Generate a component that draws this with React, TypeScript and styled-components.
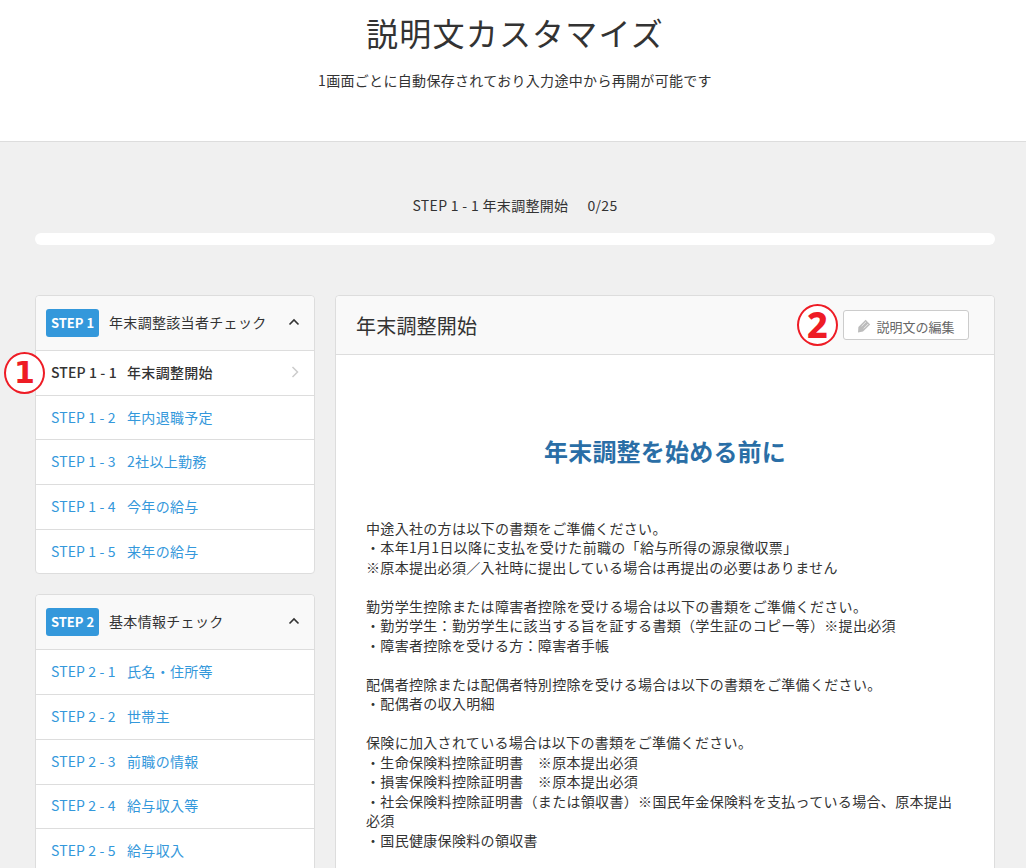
import React from "react";
import styled, { createGlobalStyle } from "styled-components";

const Global = createGlobalStyle`
  html, body { margin: 0; padding: 0; }
  body {
    background: #f0f0f0;
    color: #333;
    font-family: "Noto Sans CJK JP", "Noto Sans", sans-serif;
    font-size: 14px;
    letter-spacing: .32px;
    height: 868px;
    overflow: hidden;
  }
`;

const Header = styled.header`
  background: #fff;
  border-bottom: 1px solid #ddd;
  height: 141px;
  padding-left: 4px;
  text-align: center;
`;
const Title = styled.h1`
  margin: 0;
  padding-top: 9px;
  font-size: 32px;
  font-weight: 400;
  letter-spacing: 1.2px;
  line-height: 46px;
  color: #333;
`;
const Lead = styled.p`
  margin: 15px 0 0;
  font-size: 14px;
  line-height: 20px;
`;
const Progress = styled.section`
  padding: 53px 31px 0 35px;
`;
const ProgressLabel = styled.div`
  display: flex;
  justify-content: center;
  gap: 19px;
  font-size: 14px;
  line-height: 20px;
`;
const ProgressBar = styled.div`
  margin-top: 18px;
  height: 12px;
  border-radius: 6px;
  background: #fff;
`;
const Columns = styled.div`
  display: grid;
  grid-template-columns: 280px 660px;
  gap: 20px;
  padding: 50px 31px 0 35px;
  align-items: start;
`;
const Sidebar = styled.nav`
  display: flex;
  flex-direction: column;
  gap: 20px;
`;
const StepCard = styled.div`
  position: relative;
  background: #fff;
  border: 1px solid #ddd;
  border-radius: 4px;
`;
const StepHead = styled.div`
  display: flex;
  align-items: center;
  height: 54px;
  padding: 0 14px 2px 10px;
  box-sizing: border-box;
  background: #f9f9f9;
  border-radius: 4px 4px 0 0;
`;
const Badge = styled.span`
  flex: none;
  width: 53px;
  height: 28px;
  margin: 2px 10px 0 0;
  border-radius: 3px;
  background: #3498db;
  color: #fff;
  font-size: 13px;
  font-weight: 700;
  letter-spacing: 0;
  line-height: 27px;
  text-align: center;
`;
const StepName = styled.span`
  flex: 1;
  font-size: 14px;
  white-space: nowrap;
`;
const Row = styled.a<{ $active?: boolean }>`
  display: flex;
  align-items: center;
  height: 44.7px;
  box-sizing: border-box;
  padding: 0 15px 2px;
  border-top: 1px solid #ddd;
  color: ${(p) => (p.$active ? "#333" : "#3498db")};
  font-weight: ${(p) => (p.$active ? 500 : 400)};
  font-size: 14px;
`;
const RowCode = styled.span`
  width: 76px;
  flex: none;
  letter-spacing: .12px;
`;
const RowName = styled.span`
  flex: 1;
`;
const Marker = styled.span<{ $size: number; $font: string; $weight: number }>`
  box-sizing: border-box;
  display: flex;
  align-items: center;
  justify-content: center;
  width: 41px;
  height: 42px;
  border: 2px solid #ee1c25;
  border-radius: 50%;
  background: #fff;
  color: #ee1c25;
  font-family: ${(p) => p.$font};
  font-size: ${(p) => p.$size}px;
  font-weight: ${(p) => p.$weight};
  letter-spacing: 0;
  line-height: 1;
`;
const RowMarker = styled(Marker)`
  position: absolute;
  left: -32px;
  top: 56px;
`;
const Main = styled.main`
  background: #fff;
  border: 1px solid #ddd;
  border-radius: 4px;
  height: 700px;
`;
const MainHead = styled.div`
  display: flex;
  align-items: center;
  height: 58px;
  padding: 0 25px 0 20px;
  background: #f9f9f9;
  border-bottom: 1px solid #ddd;
  border-radius: 4px 4px 0 0;
`;
const MainTitle = styled.h2`
  flex: 1;
  margin: 0;
  font-size: 20px;
  font-weight: 400;
  letter-spacing: .2px;
`;
const EditButton = styled.button`
  display: flex;
  align-items: center;
  gap: 5px;
  height: 30px;
  width: 126px;
  margin-left: 5px;
  justify-content: center;
  padding: 2px 0 0;
  background: #fff;
  border: 1px solid #ccc;
  border-radius: 3px;
  color: #666;
  font-family: inherit;
  font-size: 13px;
  letter-spacing: 0;
`;
const Body = styled.div`
  padding: 79px 30px 0;
`;
const Heading = styled.h3`
  margin: 0 0 50.5px;
  color: #2a6ea6;
  font-size: 24px;
  font-weight: 700;
  letter-spacing: .2px;
  line-height: 34px;
  text-align: center;
`;
const Para = styled.p`
  margin: 0 0 19.5px;
  font-size: 14px;
  line-height: 19.5px;
`;

const Chevron = ({ up }: { up?: boolean }) =>
  up ? (
    <svg width="12" height="8" viewBox="0 0 12 8" fill="none" stroke="#333" strokeWidth="1.6">
      <path d="M1.5 6.5 6 2l4.5 4.5" />
    </svg>
  ) : (
    <svg width="8" height="12" viewBox="0 0 8 12" fill="none" stroke="#ccc" strokeWidth="1.5">
      <path d="M1.5 1 6.5 6l-5 5" />
    </svg>
  );

const Pencil = () => (
  <svg width="14" height="14" viewBox="0 0 14 14" fill="#bcbcbc">
    <path d="M8.6.8 13.2 5.4 6 12.6 1 13.4 1.4 8Z" />
    <path d="M4.6 7.2 9 2.8M6.8 9.4l4.4-4.4" stroke="#fff" strokeWidth=".7" fill="none" />
  </svg>
);

const steps = [
  {
    badge: "STEP 1",
    name: "年末調整該当者チェック",
    rows: [
      ["STEP 1 - 1", "年末調整開始"],
      ["STEP 1 - 2", "年内退職予定"],
      ["STEP 1 - 3", "2社以上勤務"],
      ["STEP 1 - 4", "今年の給与"],
      ["STEP 1 - 5", "来年の給与"],
    ],
  },
  {
    badge: "STEP 2",
    name: "基本情報チェック",
    rows: [
      ["STEP 2 - 1", "氏名・住所等"],
      ["STEP 2 - 2", "世帯主"],
      ["STEP 2 - 3", "前職の情報"],
      ["STEP 2 - 4", "給与収入等"],
      ["STEP 2 - 5", "給与収入"],
    ],
  },
];

const paragraphs = [
  [
    "中途入社の方は以下の書類をご準備ください。",
    "・本年1月1日以降に支払を受けた前職の「給与所得の源泉徴収票」",
    "※原本提出必須／入社時に提出している場合は再提出の必要はありません",
  ],
  [
    "勤労学生控除または障害者控除を受ける場合は以下の書類をご準備ください。",
    "・勤労学生：勤労学生に該当する旨を証する書類（学生証のコピー等）※提出必須",
    "・障害者控除を受ける方：障害者手帳",
  ],
  ["配偶者控除または配偶者特別控除を受ける場合は以下の書類をご準備ください。", "・配偶者の収入明細"],
  [
    "保険に加入されている場合は以下の書類をご準備ください。",
    "・生命保険料控除証明書　※原本提出必須",
    "・損害保険料控除証明書　※原本提出必須",
    "・社会保険料控除証明書（または領収書）※国民年金保険料を支払っている場合、原本提出必須",
    "・国民健康保険料の領収書",
  ],
];

export default function App() {
  return (
    <>
      <Global />
      <Header>
        <Title>説明文カスタマイズ</Title>
        <Lead>1画面ごとに自動保存されており入力途中から再開が可能です</Lead>
      </Header>
      <Progress>
        <ProgressLabel>
          <span>STEP 1 - 1 年末調整開始</span>
          <span>0/25</span>
        </ProgressLabel>
        <ProgressBar />
      </Progress>
      <Columns>
        <Sidebar>
          {steps.map((s, si) => (
            <StepCard key={s.badge}>
              <StepHead>
                <Badge>{s.badge}</Badge>
                <StepName>{s.name}</StepName>
                <Chevron up />
              </StepHead>
              {s.rows.map(([code, name], i) => {
                const active = si === 0 && i === 0;
                return (
                  <Row key={code} $active={active}>
                    <RowCode>{code}</RowCode>
                    <RowName>{name}</RowName>
                    {active && <Chevron />}
                  </Row>
                );
              })}
              {si === 0 && (
                <RowMarker $size={30} $font={'"DejaVu Sans", sans-serif'} $weight={700}>
                  1
                </RowMarker>
              )}
            </StepCard>
          ))}
        </Sidebar>
        <Main>
          <MainHead>
            <MainTitle>年末調整開始</MainTitle>
            <Marker $size={36} $font={'"Noto Sans", sans-serif'} $weight={800}>
              2
            </Marker>
            <EditButton>
              <Pencil />
              説明文の編集
            </EditButton>
          </MainHead>
          <Body>
            <Heading>年末調整を始める前に</Heading>
            {paragraphs.map((lines, i) => (
              <Para key={i}>
                {lines.map((l, j) => (
                  <React.Fragment key={j}>
                    {l}
                    {j < lines.length - 1 && <br />}
                  </React.Fragment>
                ))}
              </Para>
            ))}
          </Body>
        </Main>
      </Columns>
    </>
  );
}
